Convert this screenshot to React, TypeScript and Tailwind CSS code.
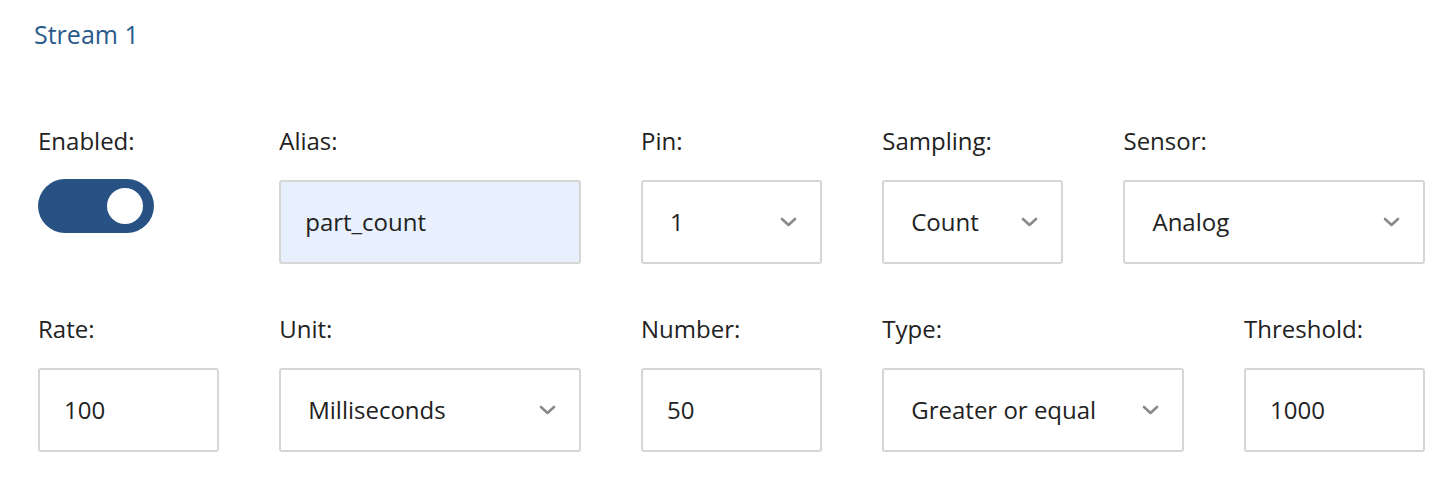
import React from 'react';

const font = { fontFamily: '"Open Sans", Lato, sans-serif' };

const Chevron = () => (
  <svg width="17" height="10" viewBox="0 0 17 10" className="shrink-0">
    <path d="M2 2 L8.5 8 L15 2" fill="none" stroke="#8a8a8a" strokeWidth="2.6" strokeLinecap="round" strokeLinejoin="round" />
  </svg>
);

interface FieldProps {
  label: string;
  cols: string;
  children: React.ReactNode;
}

// 23-column grid: narrow fields span 3, wide fields span 5, one empty column between
const Field: React.FC<FieldProps> = ({ label, cols, children }) => (
  <div className={`${cols} flex flex-col`}>
    <label className="text-[24px] leading-[32px] text-[#222]">{label}</label>
    <div className="mt-[23px]">{children}</div>
  </div>
);

const TextBox = ({ value, filled = false }: { value: string; filled?: boolean }) => (
  <div
    className={`h-[84px] flex items-center pl-[24px] rounded-[3px] border-2 border-[#d6d6d6] text-[24px] leading-[32px] text-[#222] ${
      filled ? 'bg-[#e8f0fd]' : 'bg-white'
    }`}
  >
    {value}
  </div>
);

const SelectBox = ({ value }: { value: string }) => (
  <div className="h-[84px] flex items-center justify-between pl-[27px] pr-[23px] rounded-[3px] border-2 border-[#d6d6d6] bg-white text-[24px] leading-[32px] text-[#222]">
    <span>{value}</span>
    <Chevron />
  </div>
);

const Toggle = () => (
  <div className="-mt-px w-[116px] h-[54px] rounded-full bg-[#285284] flex items-center justify-end pr-[11px]">
    <div className="w-[36px] h-[36px] rounded-full bg-white" />
  </div>
);

export default function App() {
  return (
    <div className="w-[1454px] h-[482px] bg-white" style={font}>
      <div className="pl-[34px] pt-[18px] text-[25px] leading-[32px] text-[#2a5a8c]">Stream 1</div>

      <div className="ml-[38px] w-[1387px] pt-[75px] flex flex-col gap-[49px]">
        <div className="grid grid-cols-23">
          <Field label="Enabled:" cols="col-start-1 col-span-3">
            <Toggle />
          </Field>
          <Field label="Alias:" cols="col-start-5 col-span-5">
            <TextBox value="part_count" filled />
          </Field>
          <Field label="Pin:" cols="col-start-11 col-span-3">
            <SelectBox value="1" />
          </Field>
          <Field label="Sampling:" cols="col-start-15 col-span-3">
            <SelectBox value="Count" />
          </Field>
          <Field label="Sensor:" cols="col-start-19 col-span-5">
            <SelectBox value="Analog" />
          </Field>
        </div>

        <div className="grid grid-cols-23">
          <Field label="Rate:" cols="col-start-1 col-span-3">
            <TextBox value="100" />
          </Field>
          <Field label="Unit:" cols="col-start-5 col-span-5">
            <SelectBox value="Milliseconds" />
          </Field>
          <Field label="Number:" cols="col-start-11 col-span-3">
            <TextBox value="50" />
          </Field>
          <Field label="Type:" cols="col-start-15 col-span-5">
            <SelectBox value="Greater or equal" />
          </Field>
          <Field label="Threshold:" cols="col-start-21 col-span-3">
            <TextBox value="1000" />
          </Field>
        </div>
      </div>
    </div>
  );
}
